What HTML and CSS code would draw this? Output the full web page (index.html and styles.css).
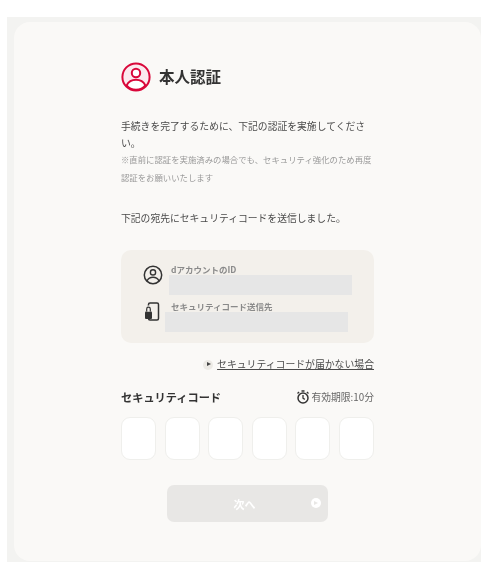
FILE: index.html
```html
<!DOCTYPE html>
<html lang="ja">
<head>
<meta charset="utf-8">
<title>本人認証</title>
<link rel="stylesheet" href="styles.css">
</head>
<body>
<div class="frame">
  <main class="card">
    <div class="content">
      <header class="head">
        <svg class="head-icon" viewBox="0 0 30 30" width="30" height="30">
          <circle cx="15" cy="15" r="13.6" fill="#fbe9ee" stroke="#d9073a" stroke-width="2"/>
          <path d="M5.6 23.4C7.5 19.6 10.8 17.8 15 17.8s7.5 1.8 9.4 5.6C22 26.6 18.8 27.8 15 27.8s-7-1.2-9.4-4.4z" fill="#fff" stroke="#d9073a" stroke-width="2"/>
          <circle cx="15" cy="11" r="4.2" fill="#fff" stroke="#d9073a" stroke-width="2"/>
        </svg>
        <h1 class="title">本人認証</h1>
      </header>
      <p class="lead">手続きを完了するために、下記の認証を実施してください。</p>
      <p class="note">※直前に認証を実施済みの場合でも、セキュリティ強化のため再度認証をお願いいたします</p>
      <p class="sent">下記の宛先にセキュリティコードを送信しました。</p>
      <section class="info">
        <div class="info-row">
          <svg class="info-icon" viewBox="0 0 20 20" width="20" height="20">
            <circle cx="10" cy="10" r="8.7" fill="none" stroke="#333" stroke-width="1.5"/>
            <circle cx="10" cy="7.4" r="2.6" fill="none" stroke="#333" stroke-width="1.4"/>
            <path d="M4 16c1.3-2.600 3.400-3.700 6-3.700s4.700 1.100 6 3.700" fill="none" stroke="#333" stroke-width="1.400"/>
          </svg>
          <div class="info-text">
            <div class="info-label">dアカウントのID</div>
            <div class="mask"></div>
          </div>
        </div>
        <div class="info-row second">
          <svg class="info-icon phone" viewBox="0 0 20 20" width="20" height="20">
            <rect x="6.500" y="1" width="10" height="17" rx="1.500" fill="none" stroke="#333" stroke-width="1.500"/>
            <path d="M5.500 3.500H10V15.500H5.500z" fill="#f3f0eb"/>
            <rect x="3" y="9.500" width="7" height="7.500" rx="1" fill="#333"/>
            <path d="M4.700 9.500V7a1.800 1.800 0 0 1 3.600 0V9.500" fill="#f3f0eb" stroke="#333" stroke-width="1.200"/>
          </svg>
          <div class="info-text shifted">
            <div class="info-label">セキュリティコード送信先</div>
            <div class="mask"></div>
          </div>
        </div>
      </section>
      <div class="help-row">
        <span class="play-dot"></span>
        <a class="help" href="#">セキュリティコードが届かない場合</a>
      </div>
      <div class="code-head">
        <h2 class="code-title">セキュリティコード</h2>
        <div class="expiry">
          <svg viewBox="0 0 14 14" width="14" height="14">
            <circle cx="7" cy="8" r="5" fill="none" stroke="#333" stroke-width="1.500"/>
            <path d="M7 5v3.200l1.800 1.200M5.500 1h3M1.500 3.500l1.600-1.500M12.500 3.500l-1.600-1.500" fill="none" stroke="#333" stroke-width="1.300"/>
          </svg>
          <span>有効期限:10分</span>
        </div>
      </div>
      <div class="code-boxes">
        <input class="box" type="text" maxlength="1" aria-label="1">
        <input class="box" type="text" maxlength="1" aria-label="2">
        <input class="box" type="text" maxlength="1" aria-label="3">
        <input class="box" type="text" maxlength="1" aria-label="4">
        <input class="box" type="text" maxlength="1" aria-label="5">
        <input class="box" type="text" maxlength="1" aria-label="6">
      </div>
      <button class="next" type="button" disabled>次へ</button>
    </div>
  </main>
</div>
</body>
</html>
```
FILE: styles.css
```css
* { box-sizing: border-box; }
html, body { margin: 0; padding: 0; height: 100%; }
body {
  background: #fff;
  font-family: "Noto Sans CJK JP", "Noto Sans", sans-serif;
  color: #333;
  overflow: hidden;
}
.frame {
  margin: 17px 0 0 7px;
  padding: 5px 0 0 7px;
  height: 545px;
  background: #f3f3f1;
}
.card {
  height: 539px;
  background: #faf9f7;
  border-radius: 16px;
  padding: 40px 107px 0 107px;
  filter: blur(0.35px);
}
.content { width: 253px; }
.head { display: flex; align-items: center; gap: 8px; height: 30px; }
.head-icon { flex: none; }
.title { margin: -2px 0 0; font-size: 15.500px; font-weight: 700; line-height: 30px; color: #333; }
.lead { margin: 26px 0 0; font-size: 9.800px; line-height: 17px; color: #4a4a4a; }
.note { margin: -2px 0 0; font-size: 8.400px; line-height: 18px; color: #999; }
.sent { margin: 24px 0 0; font-size: 9.800px; line-height: 17px; color: #4a4a4a; }
.info {
  margin-top: 23px;
  height: 93px;
  background: #f3f0eb;
  border-radius: 10px;
  padding: 14px 22px 0 22px;
}
.info-row { display: flex; align-items: flex-start; }
.second { margin-top: 6px; }
.info-icon { flex: none; margin-top: 1px; }
.phone { margin-left: -1px; margin-top: 1px; }
.info-text { flex: 1; margin-left: 6px; }
.shifted { margin-left: 3px; }
.info-label { padding-left: 2px; font-size: 8.500px; font-weight: 700; line-height: 11px; color: #8a8a8a; }
.shifted .info-label { padding-left: 6px; }
.mask { height: 20px; background: #e6e6e6; }
.shifted .mask { margin-right: 4px; }
.help-row { display: flex; justify-content: flex-end; align-items: center; gap: 4px; margin-top: 13px; height: 17px; }
.play-dot {
  width: 10px; height: 10px; border-radius: 50%; background: #eceae5; position: relative; flex: none;
}
.play-dot::after {
  content: ""; position: absolute; left: 3.500px; top: 2.500px;
  border-left: 4px solid #444; border-top: 2.500px solid transparent; border-bottom: 2.500px solid transparent;
}
.help { font-size: 9.850px; line-height: 17px; color: #4a4a4a; text-decoration: underline; }
.code-head { display: flex; justify-content: space-between; align-items: center; margin-top: 15px; height: 18px; }
.code-title { margin: 0; font-size: 11.200px; font-weight: 700; color: #333; line-height: 18px; }
.expiry { display: flex; align-items: center; gap: 1px; font-size: 9.800px; color: #666; line-height: 18px; }
.code-boxes { display: flex; justify-content: space-between; margin-top: 11px; }
.box {
  width: 35px; height: 43px; padding: 0;
  background: #fff; border: 1px solid #efefec; border-radius: 9px;
}
.next {
  display: block; position: relative;
  width: 161px; height: 37px; margin: 25px auto 0; padding: 0 6px 0 0;
  background: #e8e7e5; border: 0; border-radius: 7px;
  font-family: inherit; font-size: 11px; font-weight: 700; color: #fff;
}
.next::after {
  content: ""; position: absolute; right: 7px; top: 13px;
  width: 10px; height: 10px; border-radius: 50%; background: #fff;
}
.next::before {
  content: ""; position: absolute; right: 10px; top: 15.500px; z-index: 1;
  border-left: 4px solid #e8e7e5; border-top: 2.500px solid transparent; border-bottom: 2.500px solid transparent;
}
```
